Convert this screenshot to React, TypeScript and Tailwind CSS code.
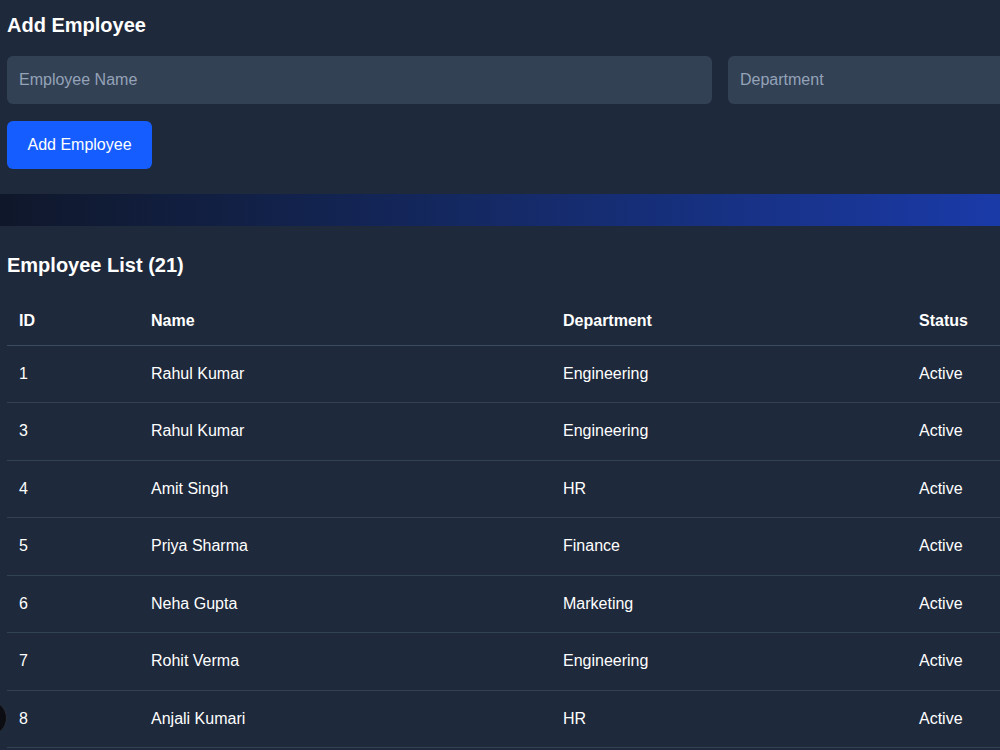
import { useState } from 'react';

interface Employee {
  id: number;
  name: string;
  department: string;
  status: string;
}

const initialEmployees: Employee[] = [
  { id: 1, name: 'Rahul Kumar', department: 'Engineering', status: 'Active' },
  { id: 3, name: 'Rahul Kumar', department: 'Engineering', status: 'Active' },
  { id: 4, name: 'Amit Singh', department: 'HR', status: 'Active' },
  { id: 5, name: 'Priya Sharma', department: 'Finance', status: 'Active' },
  { id: 6, name: 'Neha Gupta', department: 'Marketing', status: 'Active' },
  { id: 7, name: 'Rohit Verma', department: 'Engineering', status: 'Active' },
  { id: 8, name: 'Anjali Kumari', department: 'HR', status: 'Active' },
];

export default function App() {
  const [employees] = useState<Employee[]>(initialEmployees);
  const [name, setName] = useState('');
  const [department, setDepartment] = useState('');

  return (
    <main
      className="relative min-h-screen h-[750px] overflow-hidden bg-[#1e293b] text-white"
      style={{ fontFamily: '"Liberation Sans", Arial, sans-serif' }}
    >
      {/* Add form */}
      <section className="w-[1450px] px-[7px] pt-[13px]">
        <h2 className="text-[20px] leading-6 font-bold">Add Employee</h2>
        <div className="flex gap-4 mt-[19px]">
          <input
            value={name}
            onChange={(e) => setName(e.target.value)}
            placeholder="Employee Name"
            className="w-[705px] h-12 px-3 rounded-md bg-[#334155] text-white text-base placeholder:text-[#94a3b8] outline-none"
          />
          <input
            value={department}
            onChange={(e) => setDepartment(e.target.value)}
            placeholder="Department"
            className="w-[705px] h-12 px-3 rounded-md bg-[#334155] text-white text-base placeholder:text-[#94a3b8] outline-none"
          />
        </div>
        <button className="mt-[17px] w-[145px] h-12 rounded-md bg-[#165dff] text-white text-base">
          Add Employee
        </button>
      </section>

      {/* Banner */}
      <div className="mt-[25px] h-8 w-full bg-gradient-to-r from-[#0f172a] to-[#1a3aa8]"></div>

      {/* List */}
      <section className="w-[1450px] px-[7px] pt-[27px]">
        <h2 className="text-[20px] leading-6 font-bold">Employee List (21)</h2>
        <table className="mt-[20px] border-collapse text-base text-left">
          <thead>
            <tr className="border-b border-[#3b4a5f]">
              <th className="w-[132px] h-[48px] px-3 font-bold">ID</th>
              <th className="w-[412px] px-3 font-bold">Name</th>
              <th className="w-[356px] px-3 font-bold">Department</th>
              <th className="w-[300px] px-3 font-bold">Status</th>
            </tr>
          </thead>
          <tbody>
            {employees.map((emp) => (
              <tr key={emp.id} className="border-b border-[#334155]">
                <td className="h-[57.5px] px-3">{emp.id}</td>
                <td className="px-3">{emp.name}</td>
                <td className="px-3">{emp.department}</td>
                <td className="px-3">{emp.status}</td>
              </tr>
            ))}
          </tbody>
        </table>
      </section>

      {/* Floating widget, partly off-screen */}
      <div className="absolute left-[-29px] top-[700px] w-9 h-9 rounded-full bg-[#0b0d12] border border-[#2a2f3a]"></div>
    </main>
  );
}
